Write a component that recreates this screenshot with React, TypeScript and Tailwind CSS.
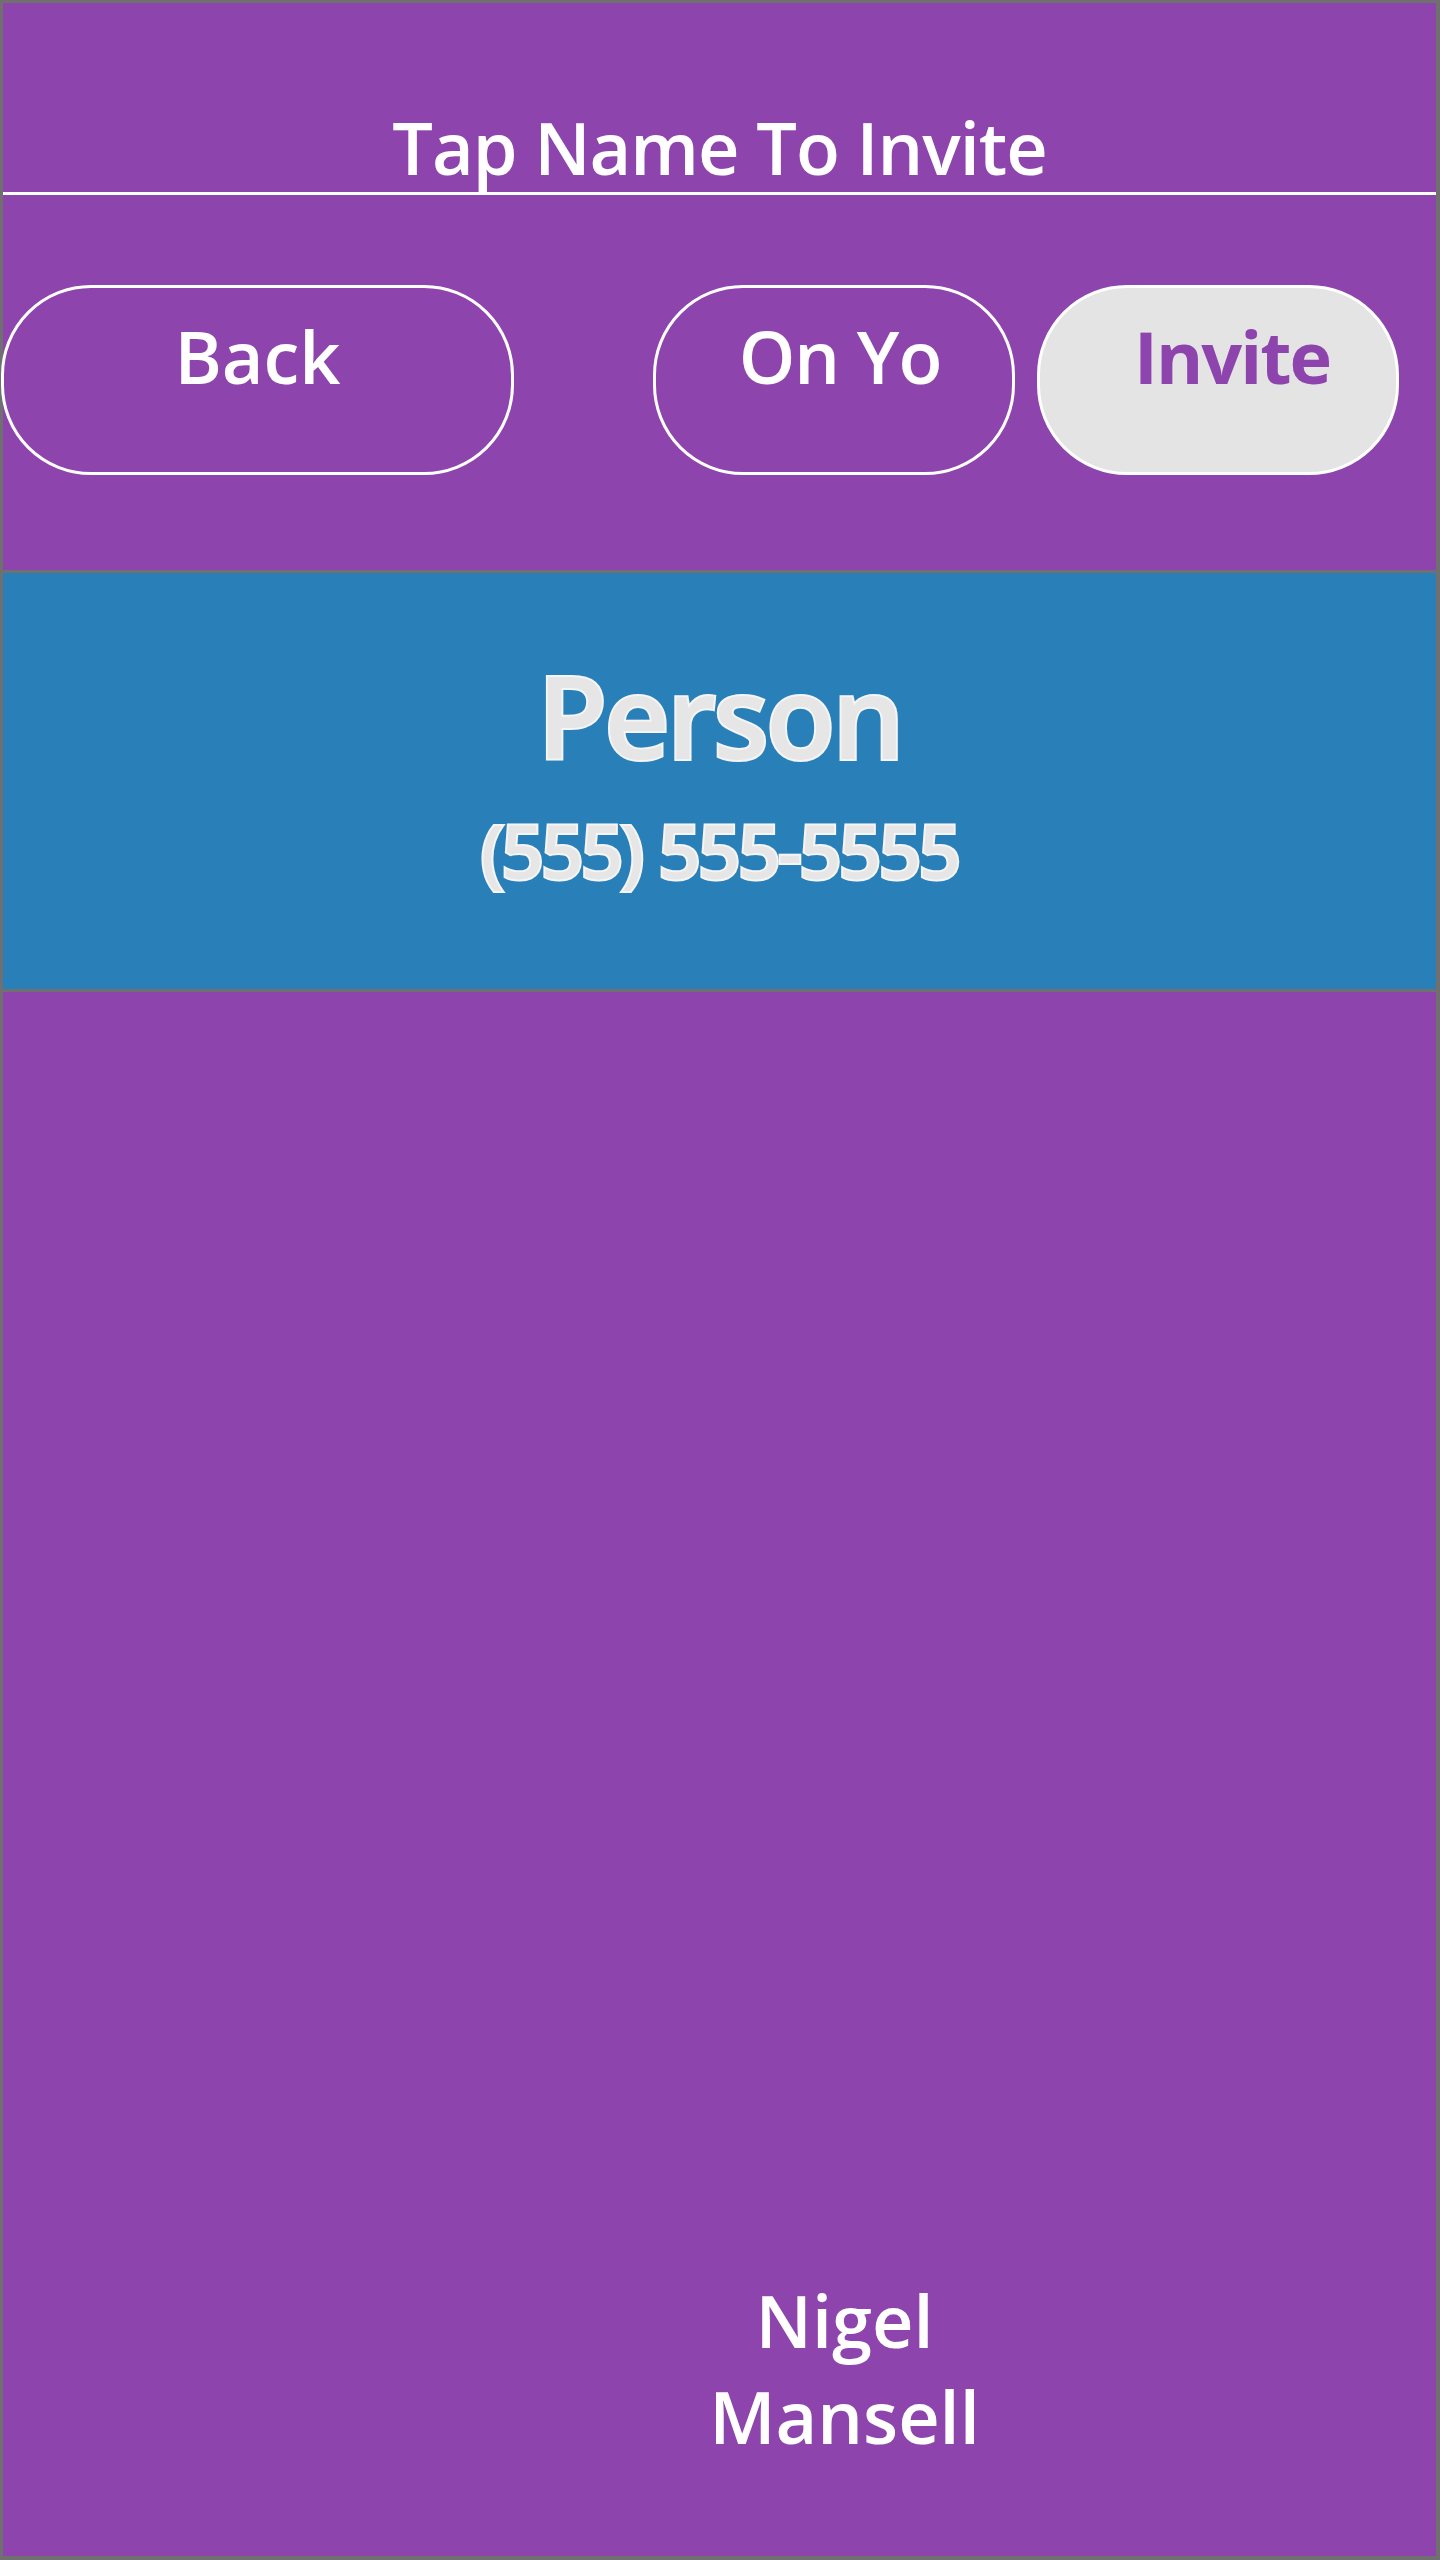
export default function App() {
  const outline =
    "text-[#e6e6e6] [-webkit-text-stroke:4px_#f5f5f5] [paint-order:stroke_fill]";

  return (
    <div className="flex h-[2560px] w-[1440px] flex-col border-t-[3px] border-l-[3px] border-r-4 border-b-4 border-[#707070] bg-[#8e44ad] font-['Open_Sans',sans-serif] text-white">
      {/* title */}
      <header className="flex justify-center pt-[108px]">
        <h1 className="text-[72px] font-semibold leading-[72px] tracking-[-1px]">Tap Name To Invite</h1>
      </header>
      <div className="mt-[9px] h-[3px] bg-white" />

      {/* actions */}
      <nav className="flex items-start pt-[90px] pb-[95px]">
        <button className="-ml-[2px] flex h-[190px] w-[513px] justify-center rounded-[90px] border-[3px] border-white pt-[32px] text-[72px] font-semibold leading-[72px] text-white">
          Back
        </button>
        <button className="ml-[139px] flex h-[190px] w-[362px] justify-center rounded-[90px] border-[3px] border-white pt-[32px] pl-[12px] text-[72px] font-semibold leading-[72px] tracking-[-1px] text-white">
          On Yo
        </button>
        <button className="ml-[22px] flex h-[190px] w-[362px] justify-center rounded-[90px] border-[3px] border-white bg-[#e4e4e4] pt-[32px] pl-[28px] text-[72px] font-bold leading-[72px] tracking-[-2px] text-[#8e44ad]">
          Invite
        </button>
      </nav>

      {/* selected contact */}
      <section className="flex h-[422px] flex-col items-center border-y-[3px] border-[#707070] bg-[#2980b9] pt-[84px]">
        <p className={`text-[114px] font-semibold leading-[116px] tracking-[-3px] ${outline}`}>Person</p>
        <p className={`mt-[41px] text-[74px] font-semibold leading-[74px] tracking-[-2.5px] ${outline}`}>
          (555) 555-5555
        </p>
      </section>

      {/* contact list */}
      <main className="flex flex-1 items-end justify-center pl-[250px] pb-[92px]">
        <p className="text-center text-[72px] font-semibold leading-[96px]">
          Nigel
          <br />
          Mansell
        </p>
      </main>
    </div>
  );
}
